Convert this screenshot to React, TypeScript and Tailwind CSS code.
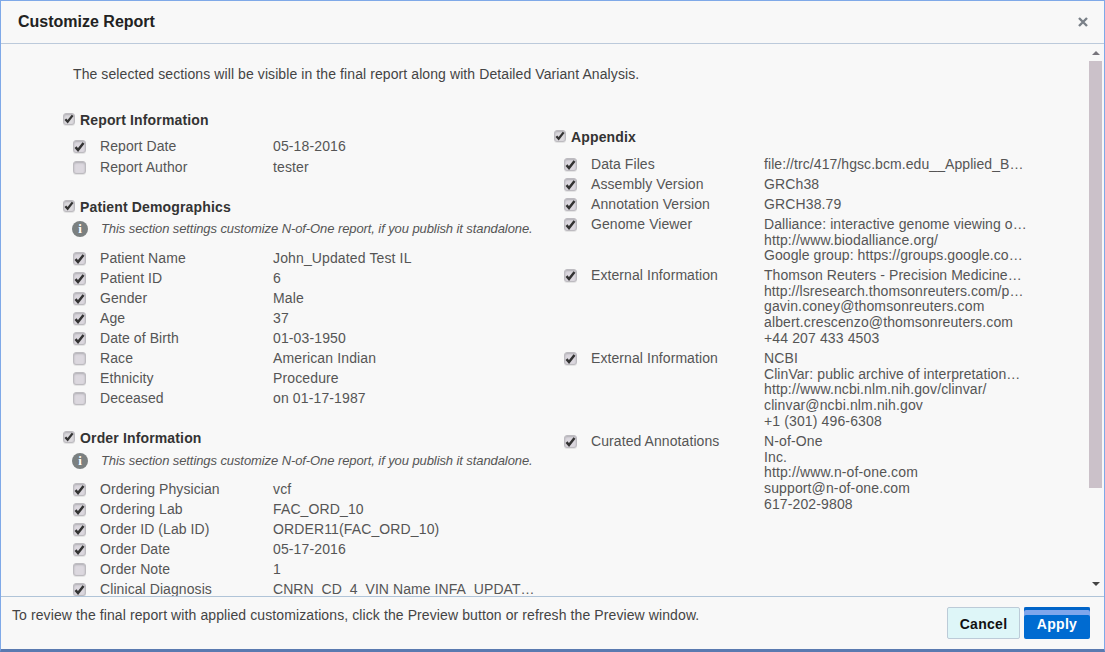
const F = "font-['Liberation_Sans',Arial,sans-serif]";

function Box({ on, small }: { on: boolean; small?: boolean }) {
  return (
    <span className={"flex shrink-0 items-center justify-center rounded-[3px] border border-[#bdbbc0] shadow-[inset_0_1px_2px_#b0aeb4,0_1px_0_#e4e4e4] " + (small ? "mb-[3px] h-[12px] w-[12px] bg-[#dcdade]" : "mt-[1px] h-[13px] w-[13px] bg-[#dcd8df]")}>
      {on && (
        <svg width="11" height="10" viewBox="0 0 11 10">
          <path d="M1.5 5.2 L4 8 L9.5 1" fill="none" stroke="#333" strokeWidth="2.5" />
        </svg>
      )}
    </span>
  );
}

function Title({ text, className = "" }: { text: string; className?: string }) {
  return (
    <div className={"flex h-[20px] items-center gap-[5px] " + className}>
      <Box on small />
      <span className="text-[14px] font-bold tracking-[0.15px] text-[#333]">{text}</span>
    </div>
  );
}

function Row({ label, value, on, extra }: { label: string; value: string | string[]; on: boolean; extra?: boolean }) {
  const lines = Array.isArray(value) ? value : [value];
  const height = lines.length === 1 ? "h-[20px]" : lines.length === 3 ? "h-[51px]" : "h-[83px]";
  return (
    <div className={"flex " + height + (extra ? " mb-[1px]" : "")}>
      <div className="flex h-[20px] w-[200px] shrink-0 items-center">
        <Box on={on} />
        <span className="ml-[14px] text-[14px] tracking-[0.08px] text-[#555]">{label}</span>
      </div>
      <div className="whitespace-nowrap pt-[3px] text-[14px] leading-[15.65px] text-[#555]">
        {lines.map((l) => (
          <div key={l} className={l.includes("…") ? "tracking-[0.07px]" : "tracking-[0.13px]"}>{l}</div>
        ))}
      </div>
    </div>
  );
}

function Note({ text, className = "" }: { text: string; className?: string }) {
  return (
    <div className={"ml-[9px] flex h-[20px] items-center gap-[13px] " + className}>
      <span className="flex h-[16px] w-[16px] shrink-0 items-center justify-center rounded-full bg-[#7b8080] font-['Liberation_Serif',serif] text-[13px] font-bold text-white">i</span>
      <span className="whitespace-nowrap text-[13px] italic tracking-[-0.09px] text-[#555]">{text}</span>
    </div>
  );
}

const rows = (list: [string, string, boolean][]) => list.map(([l, v, o]) => <Row key={l} label={l} value={v} on={o} />);

export default function App() {
  return (
    <div className={"flex h-[652px] w-[1105px] flex-col overflow-hidden border border-b-[3px] border-[#7fa9e8] border-b-[#5a7ab0] bg-[#f8f8f8] " + F}>
      <header className="flex h-[43px] shrink-0 items-center justify-between border-b border-[#bccadb] pl-[17px] pr-[15px]">
        <h1 className="text-[16px] font-bold text-[#222]">Customize Report</h1>
        <svg width="12" height="12" viewBox="0 0 12 12"><path d="M2 2 L10 10 M10 2 L2 10" stroke="#7a8088" strokeWidth="2.4" /></svg>
      </header>

      <main className="flex min-h-0 flex-1">
        <div className="min-w-0 flex-1 overflow-hidden">
          <p className="ml-[72px] mt-[21px] text-[14px] leading-[18px] tracking-[0.09px] text-[#444]">The selected sections will be visible in the final report along with Detailed Variant Analysis.</p>
          <div className="flex">
            <section className="ml-[62px] mt-[27px] w-[491px] shrink-0">
              <Title text="Report Information" />
              <div className="ml-[10px] mt-[6px]">
                <Row label="Report Date" value="05-18-2016" on extra />
                <Row label="Report Author" value="tester" on={false} />
              </div>
              <Title text="Patient Demographics" className="mt-[20px]" />
              <Note className="mt-[2px]" text="This section settings customize N-of-One report, if you publish it standalone." />
              <div className="ml-[10px] mt-[9px]">
                {rows([
                  ["Patient Name", "John_Updated Test IL", true],
                  ["Patient ID", "6", true],
                  ["Gender", "Male", true],
                  ["Age", "37", true],
                  ["Date of Birth", "01-03-1950", true],
                  ["Race", "American Indian", false],
                  ["Ethnicity", "Procedure", false],
                  ["Deceased", "on 01-17-1987", false],
                ])}
              </div>
              <Title text="Order Information" className="mt-[20px]" />
              <Note className="mt-[3px]" text="This section settings customize N-of-One report, if you publish it standalone." />
              <div className="ml-[10px] mt-[8px]">
                {rows([
                  ["Ordering Physician", "vcf", true],
                  ["Ordering Lab", "FAC_ORD_10", true],
                  ["Order ID (Lab ID)", "ORDER11(FAC_ORD_10)", true],
                  ["Order Date", "05-17-2016", true],
                  ["Order Note", "1", false],
                  ["Clinical Diagnosis", "CNRN_CD_4_VIN Name INFA_UPDAT…", true],
                ])}
              </div>
            </section>
            <section className="mt-[44px] flex-1">
              <Title text="Appendix" />
              <div className="ml-[10px] mt-[7px]">
                <Row label="Data Files" value="file://trc/417/hgsc.bcm.edu__Applied_B…" on />
                <Row label="Assembly Version" value="GRCh38" on />
                <Row label="Annotation Version" value="GRCH38.79" on />
                <Row label="Genome Viewer" value={["Dalliance: interactive genome viewing o…", "http://www.biodalliance.org/", "Google group: https://groups.google.co…"]} on />
                <Row label="External Information" value={["Thomson Reuters - Precision Medicine…", "http://lsresearch.thomsonreuters.com/p…", "gavin.coney@thomsonreuters.com", "albert.crescenzo@thomsonreuters.com", "+44 207 433 4503"]} on />
                <Row label="External Information" value={["NCBI", "ClinVar: public archive of interpretation…", "http://www.ncbi.nlm.nih.gov/clinvar/", "clinvar@ncbi.nlm.nih.gov", "+1 (301) 496-6308"]} on />
                <Row label="Curated Annotations" value={["N-of-One", "Inc.", "http://www.n-of-one.com", "support@n-of-one.com", "617-202-9808"]} on />
              </div>
            </section>
          </div>
        </div>
        <div className="mr-[1px] flex w-[15px] shrink-0 flex-col items-center">
          <span className="mt-[7px] h-0 w-0 border-x-[4px] border-b-[4px] border-x-transparent border-b-[#77757c]" />
          <span className="mt-[6px] h-[427px] w-[13px] bg-[#cbc1c9]" />
          <span className="mt-[94px] h-0 w-0 border-x-[4px] border-t-[4px] border-x-transparent border-t-[#444]" />
        </div>
      </main>

      <footer className="flex h-[53px] shrink-0 items-start justify-between border-t border-[#b0c4d8] pl-[11px] pr-[14px]">
        <span className="mt-[8px] text-[14px] tracking-[0.1px] text-[#444]">To review the final report with applied customizations, click the Preview button or refresh the Preview window.</span>
        <div className="mt-[10px] flex gap-[4px]">
          <button className="h-[32px] w-[73px] rounded-[2px] border border-[#bccbd8] bg-[#def6f8] pt-[2px] text-[14px] font-bold tracking-[0.3px] text-[#111]">Cancel</button>
          <button className="h-[32px] w-[66px] rounded-[2px] bg-[#006bd1] pt-[2px] text-[14px] font-bold tracking-[0.3px] text-white shadow-[inset_0_3px_0_#0064c8,inset_0_8px_0_#7fa6ec]">Apply</button>
        </div>
      </footer>
    </div>
  );
}
